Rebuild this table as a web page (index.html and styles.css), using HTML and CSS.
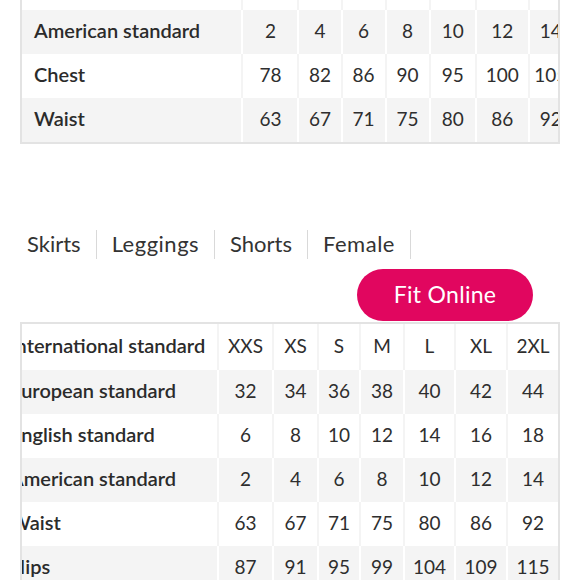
FILE: index.html
```html
<!DOCTYPE html>
<html lang="en">
<head>
<meta charset="utf-8">
<title>Size chart</title>
<link rel="stylesheet" href="styles.css">
</head>
<body>
<div class="chart chart-top">
  <table class="size-table top-table">
    <tr class="row-white"><th class="label">International standard</th><td>XXS</td><td>XS</td><td>S</td><td>M</td><td>L</td><td>XL</td><td>2XL</td><td>3XL</td></tr>
    <tr class="row-gray"><th class="label">American standard</th><td>2</td><td>4</td><td>6</td><td>8</td><td>10</td><td>12</td><td>14</td><td>16</td></tr>
    <tr class="row-white"><th class="label">Chest</th><td>78</td><td>82</td><td>86</td><td>90</td><td>95</td><td>100</td><td>105</td><td>110</td></tr>
    <tr class="row-gray"><th class="label">Waist</th><td>63</td><td>67</td><td>71</td><td>75</td><td>80</td><td>86</td><td>92</td><td>98</td></tr>
  </table>
</div>

<nav class="tabs">
  <span class="tab tab-skirts">Skirts</span>
  <span class="tab tab-leggings">Leggings</span>
  <span class="tab tab-shorts">Shorts</span>
  <span class="tab tab-female">Female</span>
</nav>

<div class="action-row">
  <button class="fit-btn">Fit Online</button>
</div>

<div class="chart chart-bottom">
  <table class="size-table bottom-table">
    <tr class="row-white"><th class="label">International standard</th><td>XXS</td><td>XS</td><td>S</td><td>M</td><td>L</td><td>XL</td><td>2XL</td></tr>
    <tr class="row-gray"><th class="label">European standard</th><td>32</td><td>34</td><td>36</td><td>38</td><td>40</td><td>42</td><td>44</td></tr>
    <tr class="row-white"><th class="label">English standard</th><td>6</td><td>8</td><td>10</td><td>12</td><td>14</td><td>16</td><td>18</td></tr>
    <tr class="row-gray"><th class="label">American standard</th><td>2</td><td>4</td><td>6</td><td>8</td><td>10</td><td>12</td><td>14</td></tr>
    <tr class="row-white"><th class="label">Waist</th><td>63</td><td>67</td><td>71</td><td>75</td><td>80</td><td>86</td><td>92</td></tr>
    <tr class="row-gray"><th class="label">Hips</th><td>87</td><td>91</td><td>95</td><td>99</td><td>104</td><td>109</td><td>115</td></tr>
  </table>
</div>
</body>
</html>
```

FILE: styles.css
```css
html, body {
  margin: 0;
  padding: 0;
  background: #ffffff;
}

body {
  font-family: "Lato", "Noto Sans", sans-serif;
  color: #2e2e2e;
  width: 580px;
  height: 580px;
  overflow: hidden;
}

.chart {
  margin-left: 20px;
  width: 536px;
  overflow: hidden;
  border-left: 2px solid #e3e3e3;
  border-right: 2px solid #e3e3e3;
}

.chart-top {
  margin-top: -36px;
  border-bottom: 2px solid #e3e3e3;
}

.chart-bottom {
  border-top: 2px solid #e3e3e3;
}

.size-table {
  border-collapse: collapse;
  table-layout: fixed;
  font-size: 19px;
}

.size-table th,
.size-table td {
  height: 44px;
  padding: 0 0 4px 0;
  box-sizing: border-box;
  text-align: center;
  white-space: nowrap;
  font-weight: 400;
  border-right: 2px solid #f4f4f4;
}

.size-table .label {
  text-align: left;
  padding-left: 12px;
  font-size: 20px;
  font-weight: 600;
  color: #2b2b2b;
}

.size-table tr:first-child th,
.size-table tr:first-child td {
  height: 46px;
}

.row-gray th,
.row-gray td {
  background: #f4f4f4;
  border-right-color: #ffffff;
}

.row-white th,
.row-white td {
  background: #ffffff;
  border-right-color: #f4f4f4;
}

/* top table column widths */
.top-table {
  width: 596px;
}
.top-table th { width: 220px; }
.top-table td:nth-of-type(1) { width: 56px; }
.top-table td:nth-of-type(2) { width: 43px; }
.top-table td:nth-of-type(3) { width: 44px; }
.top-table td:nth-of-type(4) { width: 44px; }
.top-table td:nth-of-type(5) { width: 46px; }
.top-table td:nth-of-type(6) { width: 53px; }
.top-table td:nth-of-type(7) { width: 44px; }
.top-table td:nth-of-type(8) { width: 44px; }

/* bottom table, scrolled horizontally */
.bottom-table {
  margin-left: -24px;
  width: 562px;
}
.bottom-table th { width: 220px; }
.bottom-table td:nth-of-type(1) { width: 55px; }
.bottom-table td:nth-of-type(2) { width: 45px; }
.bottom-table td:nth-of-type(3) { width: 42px; }
.bottom-table td:nth-of-type(4) { width: 44px; }
.bottom-table td:nth-of-type(5) { width: 51px; }
.bottom-table td:nth-of-type(6) { width: 52px; }
.bottom-table td:nth-of-type(7) { width: 52px; }

.tabs {
  display: flex;
  margin-top: 86px;
  padding-left: 12px;
  height: 29px;
}

.tab {
  display: flex;
  align-items: center;
  padding: 0 15px 2px;
  font-size: 22px;
  line-height: 27px;
  color: #333333;
  border-right: 1px solid #d9d9d9;
}

.tab-leggings { letter-spacing: 0.5px; }
.tab-female { letter-spacing: 0.5px; }

.action-row {
  display: flex;
  justify-content: flex-end;
  padding-right: 47px;
  margin-top: 10px;
  margin-bottom: 1px;
}

.fit-btn {
  width: 176px;
  height: 52px;
  border: none;
  border-radius: 26px;
  background: #e1065f;
  color: #ffffff;
  font-family: "Lato", "Noto Sans", sans-serif;
  font-size: 23px;
  letter-spacing: 0.3px;
  padding: 0 0 2px;
}
```
